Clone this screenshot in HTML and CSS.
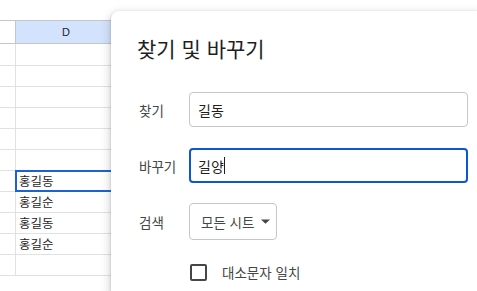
FILE: index.html
```html
<!DOCTYPE html>
<html lang="ko">
<head>
<meta charset="utf-8">
<link rel="stylesheet" href="styles.css">
</head>
<body>
<div class="sheet">
  <div class="row head"><div class="c rh"></div><div class="c cd">D</div><div class="c rest"></div></div>
  <div class="row first"><div class="c rh"></div><div class="c cd"></div><div class="c rest"></div></div>
  <div class="row"><div class="c rh"></div><div class="c cd"></div><div class="c rest"></div></div>
  <div class="row"><div class="c rh"></div><div class="c cd"></div><div class="c rest"></div></div>
  <div class="row"><div class="c rh"></div><div class="c cd"></div><div class="c rest"></div></div>
  <div class="row"><div class="c rh"></div><div class="c cd"></div><div class="c rest"></div></div>
  <div class="row"><div class="c rh"></div><div class="c cd"></div><div class="c rest"></div></div>
  <div class="row"><div class="c rh"></div><div class="c cd sel">홍길동</div><div class="c rest"></div></div>
  <div class="row"><div class="c rh"></div><div class="c cd">홍길순</div><div class="c rest"></div></div>
  <div class="row"><div class="c rh"></div><div class="c cd">홍길동</div><div class="c rest"></div></div>
  <div class="row"><div class="c rh"></div><div class="c cd">홍길순</div><div class="c rest"></div></div>
  <div class="row"><div class="c rh"></div><div class="c cd"></div><div class="c rest"></div></div>
</div>

<div class="dialog">
  <div class="title">찾기 및 바꾸기</div>
  <div class="field find">
    <div class="label">찾기</div>
    <div class="input">길동</div>
  </div>
  <div class="field replace">
    <div class="label">바꾸기</div>
    <div class="input focus">길양<span class="caret"></span></div>
  </div>
  <div class="field search">
    <div class="label">검색</div>
    <div class="select">모든 시트<svg class="arrow" width="9" height="5" viewBox="0 0 9 5"><path d="M0 0.5L4.5 4.8L9 0.5Z" fill="#444746"/></svg></div>
  </div>
  <div class="check">
    <span class="box"></span>
    <span class="check-label">대소문자 일치</span>
  </div>
</div>
</body>
</html>
```

FILE: styles.css
```css
html, body {
  margin: 0;
  padding: 0;
  background: #fff;
  overflow: hidden;
}
body {
  width: 477px;
  height: 291px;
  position: relative;
  font-family: "Noto Sans CJK KR", "Noto Sans", sans-serif;
}
.sheet {
  padding-top: 20px;
  height: 291px;
  box-sizing: border-box;
  overflow: hidden;
}
.row {
  display: grid;
  grid-template-columns: 16px 101px 1fr;
  height: 21px;
  box-sizing: border-box;
  border-bottom: 1px solid #e1e1e1;
}
.row.first {
  height: 22px;
}
.row.head {
  height: 24px;
  border-top: 1px solid #c4c7c5;
  border-bottom: 1px solid #c4c7c5;
}
.c {
  border-right: 1px solid #e1e1e1;
  font-size: 12.5px;
  color: #1f1f1f;
  line-height: 20px;
  padding-left: 3px;
  white-space: nowrap;
  position: relative;
}
.rh, .rest {
  padding-left: 0;
}
.head .c {
  border-right-color: #c4c7c5;
  line-height: 22px;
}
.head .cd {
  background: #d3e3fd;
  text-align: center;
  font-family: "Liberation Sans", Arial, sans-serif;
  font-size: 11px;
  color: #1f1f1f;
  padding-left: 0;
}
.sel::after {
  content: "";
  position: absolute;
  left: -1px;
  top: -1px;
  right: -2px;
  bottom: -1px;
  border: 2px solid #1a62d6;
}

.dialog {
  position: absolute;
  left: 111px;
  top: 11px;
  right: 0;
  bottom: 0;
  background: #fff;
  border-radius: 8px 0 0 0;
  box-shadow: 0 4px 8px 3px rgba(60, 64, 67, 0.15), 0 1px 3px rgba(60, 64, 67, 0.3);
  padding: 23px 0 0 26px;
  box-sizing: border-box;
  overflow: hidden;
}
.title {
  font-size: 21px;
  line-height: 28px;
  color: #1f1f1f;
}
.field {
  display: flex;
  align-items: center;
}
.find { margin-top: 30px; }
.replace { margin-top: 21px; }
.search { margin-top: 20px; }
.label {
  width: 50px;
  padding-left: 2px;
  font-size: 13.5px;
  color: #444746;
}
.input {
  width: 279px;
  height: 35px;
  box-sizing: border-box;
  border: 1px solid #c4c7c5;
  border-radius: 4px;
  padding-left: 8px;
  font-size: 14px;
  color: #1f1f1f;
  display: flex;
  align-items: center;
}
.input.focus {
  border: 2px solid #0b57d0;
  padding-left: 7px;
}
.caret {
  display: inline-block;
  width: 1px;
  height: 17px;
  background: #1f1f1f;
}
.select {
  height: 37px;
  width: 88px;
  box-sizing: border-box;
  border: 1px solid #c4c7c5;
  border-radius: 4px;
  padding-left: 11px;
  font-size: 13.5px;
  color: #444746;
  display: flex;
  align-items: center;
  gap: 7px;
}
.arrow {
  display: block;
}
.check {
  margin-top: 22px;
  margin-left: 53px;
  display: flex;
  align-items: center;
  gap: 15px;
}
.box {
  width: 17px;
  height: 17px;
  box-sizing: border-box;
  border: 2px solid #444746;
  border-radius: 2px;
}
.check-label {
  font-size: 13.5px;
  color: #444746;
}
```
